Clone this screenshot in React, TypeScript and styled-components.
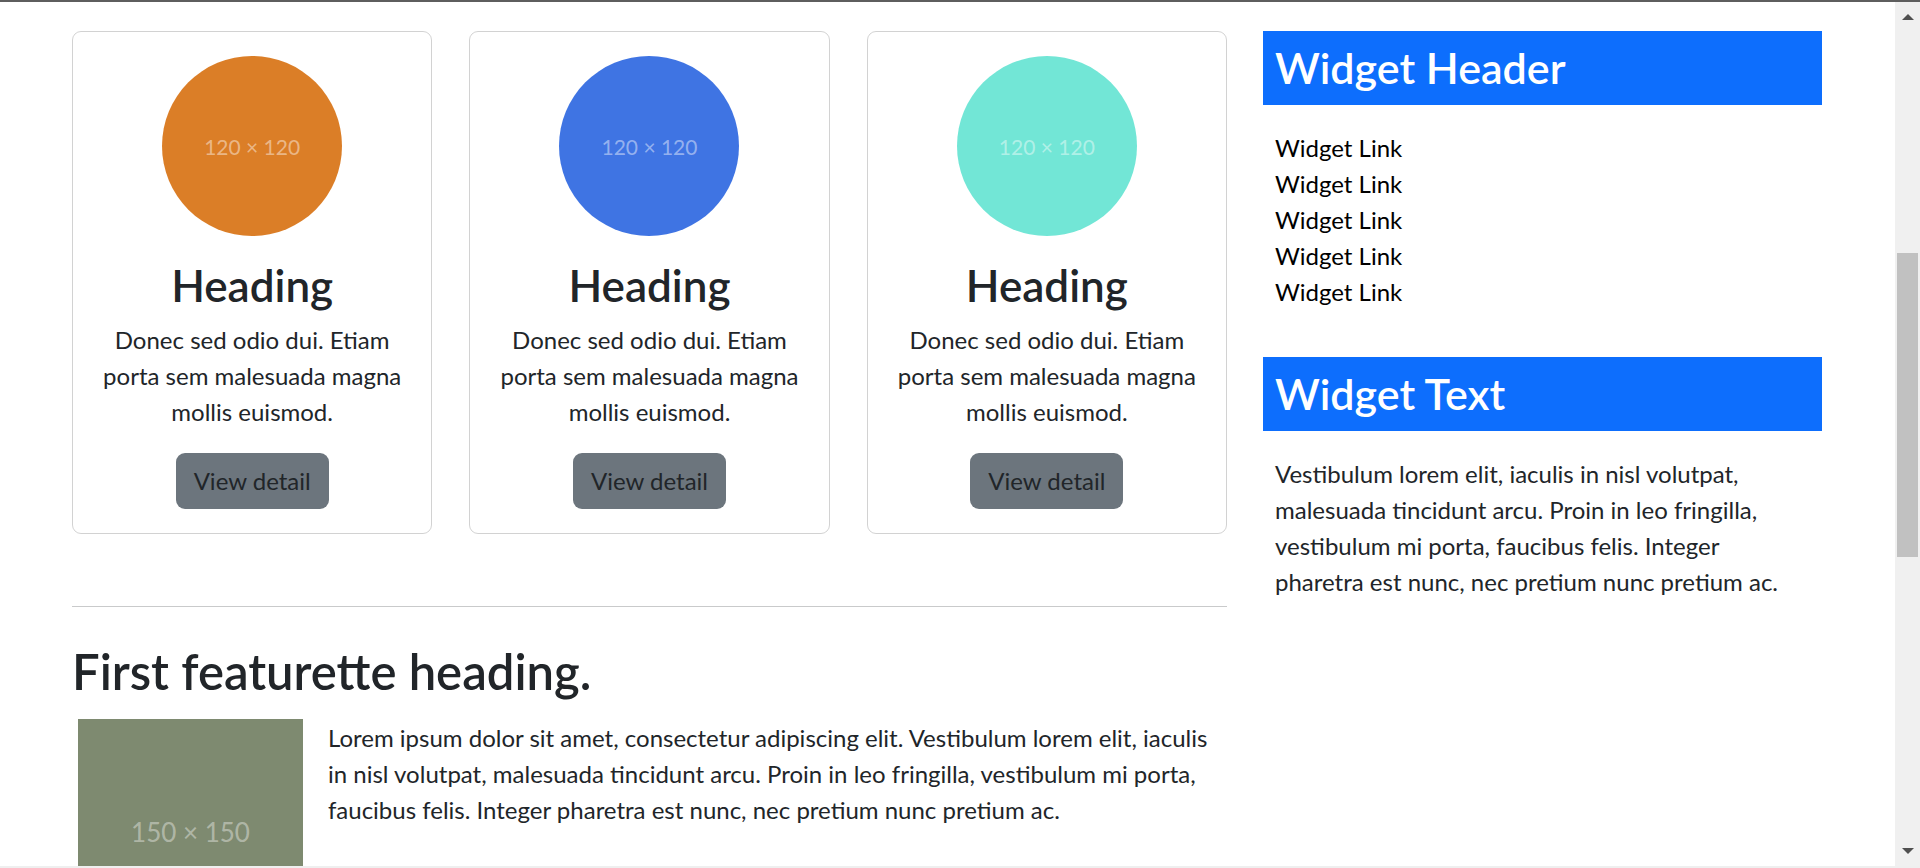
import styled, { createGlobalStyle } from 'styled-components';

const GlobalStyle = createGlobalStyle`
  html, body {
    margin: 0;
    height: 100%;
    overflow: hidden;
    background: #fff;
  }
  body {
    font-family: 'Lato', 'Open Sans', sans-serif;
    color: #212529;
  }
  * {
    box-sizing: border-box;
  }
`;

const cards = [
  { color: '#db7e27' },
  { color: '#3f74e3' },
  { color: '#72e6d6' },
];

const widgetLinks = ['Widget Link', 'Widget Link', 'Widget Link', 'Widget Link', 'Widget Link'];

function App() {
  return (
    <>
      <GlobalStyle />
      <Page>
        <Main>
          <ContentColumn>
            <CardRow>
              {cards.map((card, i) => (
                <Card key={i}>
                  <Circle $color={card.color}>120 × 120</Circle>
                  <CardHeading>Heading</CardHeading>
                  <CardText>
                    Donec sed odio dui. Etiam porta sem malesuada magna mollis euismod.
                  </CardText>
                  <DetailButton>View detail</DetailButton>
                </Card>
              ))}
            </CardRow>

            <Divider />

            <FeaturetteHeading>First featurette heading.</FeaturetteHeading>
            <Featurette>
              <Thumb>150 × 150</Thumb>
              <FeaturetteText>
                Lorem ipsum dolor sit amet, consectetur adipiscing elit. Vestibulum lorem elit, iaculis
                in nisl volutpat, malesuada tincidunt arcu. Proin in leo fringilla, vestibulum mi porta,
                faucibus felis. Integer pharetra est nunc, nec pretium nunc pretium ac.
              </FeaturetteText>
            </Featurette>
          </ContentColumn>

          <Sidebar>
            <WidgetHeader>Widget Header</WidgetHeader>
            <LinkList>
              {widgetLinks.map((label, i) => (
                <li key={i}>
                  <WidgetLink href="#">{label}</WidgetLink>
                </li>
              ))}
            </LinkList>
            <WidgetHeader>Widget Text</WidgetHeader>
            <WidgetText>
              Vestibulum lorem elit, iaculis in nisl volutpat, malesuada tincidunt arcu. Proin in leo
              fringilla, vestibulum mi porta, faucibus felis. Integer pharetra est nunc, nec pretium
              nunc pretium ac.
            </WidgetText>
          </Sidebar>
        </Main>

        <Scrollbar>
          <ArrowSlot>
            <ArrowUp />
          </ArrowSlot>
          <ScrollThumb />
          <Spacer />
          <ArrowSlot>
            <ArrowDown />
          </ArrowSlot>
        </Scrollbar>
      </Page>
    </>
  );
}

export default App;

// styles
const Page = styled.div`
  display: flex;
  height: 100vh;
  border-top: 2px solid #5e5e5e;
  border-bottom: 2px solid #efefef;
  overflow: hidden;
`;

const Main = styled.div`
  flex: 1;
  display: flex;
  gap: 36px;
  padding: 29px 0 0 72px;
  overflow: hidden;
`;

const ContentColumn = styled.div`
  width: 1155px;
  flex-shrink: 0;
`;

const CardRow = styled.div`
  display: grid;
  grid-template-columns: repeat(3, 1fr);
  column-gap: 37px;
`;

const Card = styled.div`
  display: flex;
  flex-direction: column;
  align-items: center;
  text-align: center;
  padding: 24px;
  border: 1px solid rgba(0, 0, 0, 0.175);
  border-radius: 9px;
`;

const Circle = styled.div<{ $color: string }>`
  width: 180px;
  height: 180px;
  border-radius: 50%;
  background: ${(p) => p.$color};
  display: flex;
  align-items: center;
  justify-content: center;
  color: rgba(255, 255, 255, 0.45);
  font-size: 21px;
`;

const CardHeading = styled.h2`
  margin: 22px 0 0;
  font-size: 44px;
  line-height: 54px;
  font-weight: 600;
`;

const CardText = styled.p`
  margin: 10px 0 0;
  font-size: 24px;
  line-height: 36px;
`;

const DetailButton = styled.button`
  margin-top: 23px;
  height: 56px;
  padding: 0 18px;
  border: none;
  border-radius: 9px;
  background: #6c757d;
  color: #212529;
  font-family: inherit;
  font-size: 24px;
  line-height: 56px;
  cursor: pointer;
`;

const Divider = styled.hr`
  margin: 72px 0 0;
  border: none;
  border-top: 1px solid #c9cacb;
`;

const FeaturetteHeading = styled.h2`
  margin: 36px 0 0;
  font-size: 49px;
  line-height: 57px;
  font-weight: 600;
`;

const Featurette = styled.div`
  display: flex;
  align-items: flex-start;
  gap: 25px;
  margin-top: 19px;
`;

const Thumb = styled.div`
  flex-shrink: 0;
  width: 225px;
  height: 225px;
  margin-left: 6px;
  background: #7e8a70;
  display: flex;
  align-items: center;
  justify-content: center;
  color: rgba(255, 255, 255, 0.4);
  font-size: 26px;
`;

const FeaturetteText = styled.p`
  margin: 1px 0 0;
  font-size: 24px;
  line-height: 36px;
`;

const Sidebar = styled.aside`
  width: 559px;
  flex-shrink: 0;
`;

const WidgetHeader = styled.h2`
  margin: 0;
  padding: 8px 12px;
  background: #0d6efd;
  color: #fff;
  font-size: 43px;
  line-height: 58px;
  font-weight: 600;
`;

const LinkList = styled.ul`
  list-style: none;
  margin: 25px 0 47px;
  padding: 0 12px;
  font-size: 24px;
  line-height: 36px;
`;

const WidgetLink = styled.a`
  color: #000;
  text-decoration: none;
`;

const WidgetText = styled.p`
  margin: 25px 0 0;
  padding: 0 12px;
  font-size: 24px;
  line-height: 36px;
`;

const Scrollbar = styled.div`
  width: 25px;
  flex-shrink: 0;
  display: flex;
  flex-direction: column;
  align-items: center;
  background: #f0f0f0;
`;

const ArrowSlot = styled.div`
  height: 30px;
  display: flex;
  align-items: center;
  justify-content: center;
`;

const ArrowUp = styled.div`
  width: 0;
  height: 0;
  border-left: 6px solid transparent;
  border-right: 6px solid transparent;
  border-bottom: 6px solid #505050;
`;

const ArrowDown = styled.div`
  width: 0;
  height: 0;
  border-left: 6px solid transparent;
  border-right: 6px solid transparent;
  border-top: 6px solid #505050;
`;

const ScrollThumb = styled.div`
  width: 21px;
  height: 304px;
  margin-top: 221px;
  background: #c1c1c1;
`;

const Spacer = styled.div`
  flex: 1;
`;
